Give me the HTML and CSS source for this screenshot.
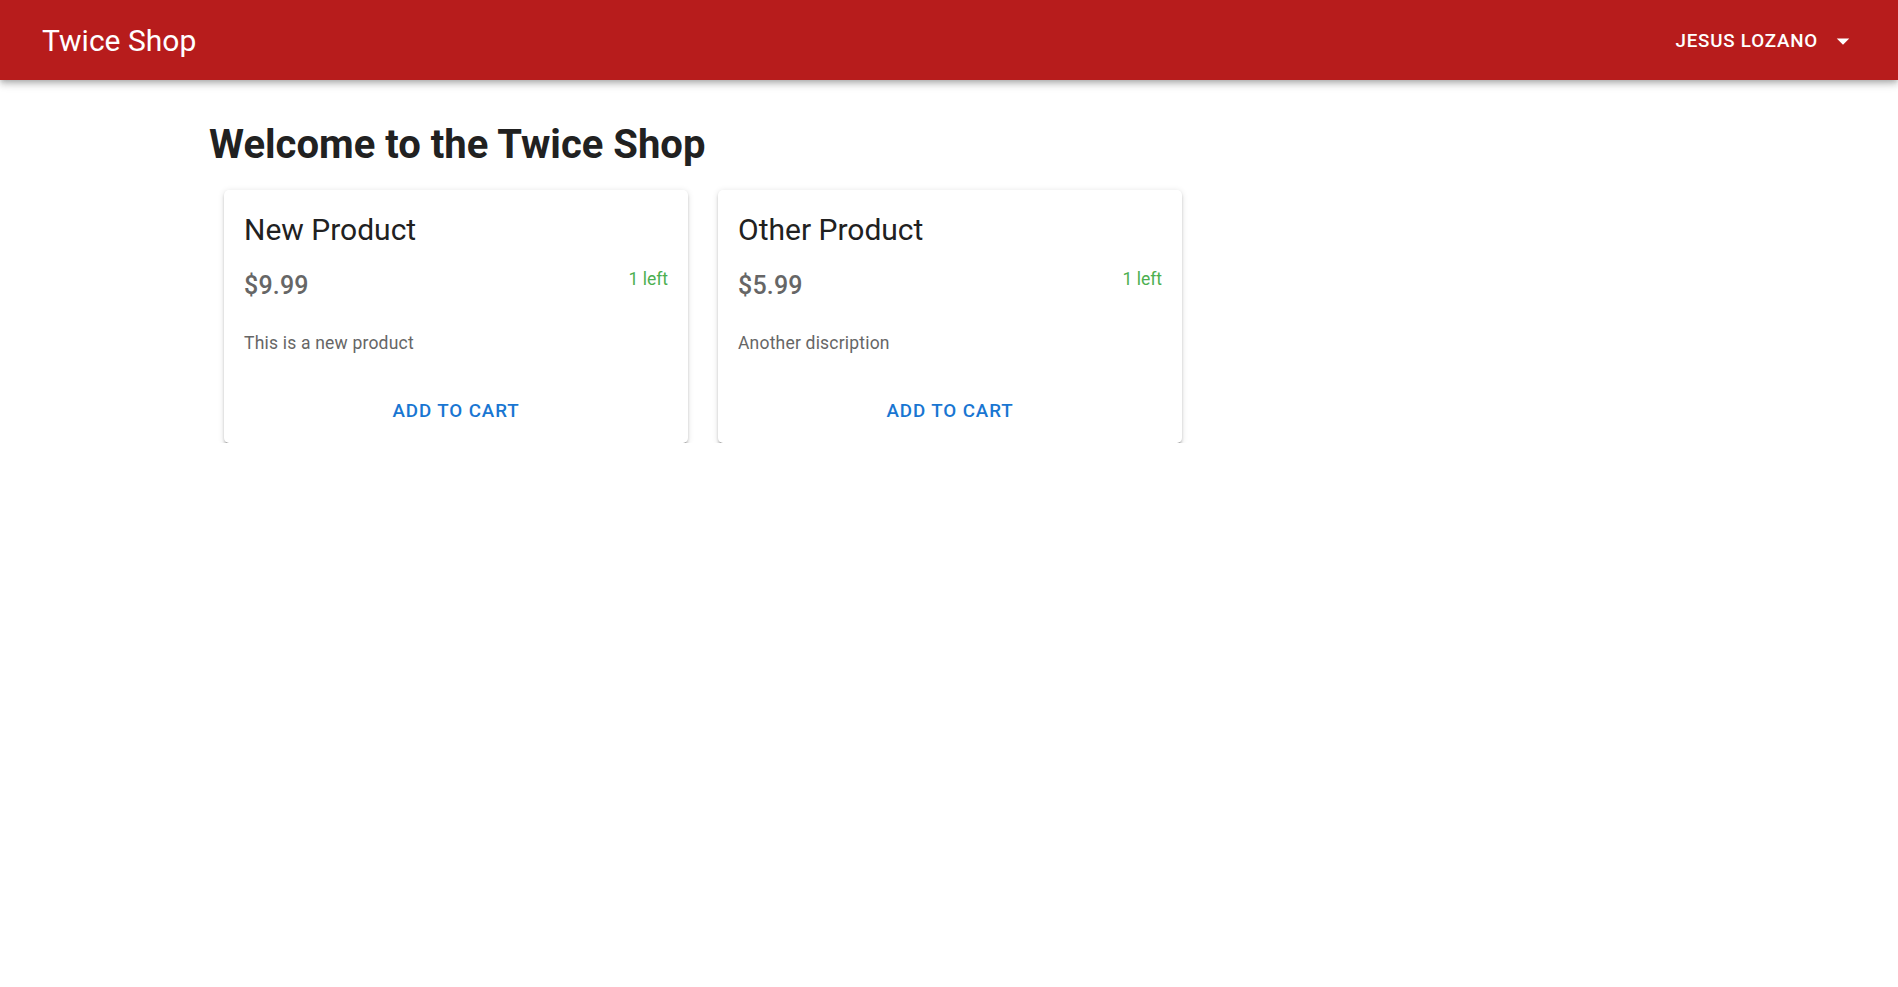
FILE: index.html
```html
<!DOCTYPE html>
<html lang="en">
<head>
<meta charset="utf-8">
<title>Twice Shop</title>
<link rel="stylesheet" href="styles.css">
</head>
<body>
<header class="appbar">
  <div class="brand">Twice Shop</div>
  <button class="user-btn">
    <span>Jesus Lozano</span>
    <svg class="drop" viewBox="0 0 24 24" width="30" height="30"><path d="M7 10l5 5 5-5z" fill="#fff"/></svg>
  </button>
</header>
<main class="page">
  <h1 class="welcome">Welcome to the Twice Shop</h1>
  <div class="cards">
    <div class="card">
      <div class="card-content">
        <h2 class="card-title">New Product</h2>
        <div class="price-row">
          <span class="price">$9.99</span>
          <span class="stock">1 left</span>
        </div>
        <p class="desc">This is a new product</p>
      </div>
      <div class="card-actions">
        <button class="cart-btn">Add to cart</button>
      </div>
    </div>
    <div class="card">
      <div class="card-content">
        <h2 class="card-title">Other Product</h2>
        <div class="price-row">
          <span class="price">$5.99</span>
          <span class="stock">1 left</span>
        </div>
        <p class="desc">Another discription</p>
      </div>
      <div class="card-actions">
        <button class="cart-btn">Add to cart</button>
      </div>
    </div>
  </div>
</main>
</body>
</html>
```

FILE: styles.css
```css
* { box-sizing: border-box; }
html, body {
  margin: 0;
  padding: 0;
  background: #fff;
  font-family: Roboto, "Liberation Sans", sans-serif;
}
.appbar {
  height: 80px;
  background: #b71c1c;
  color: #fff;
  display: flex;
  align-items: center;
  justify-content: space-between;
  padding: 0 30px 0 42px;
  box-shadow: 0px 2.5px 5px -1.25px rgba(0,0,0,0.2), 0px 5px 6px 0px rgba(0,0,0,0.14), 0px 1.25px 12.5px 0px rgba(0,0,0,0.12);
  position: relative;
  z-index: 1;
}
.brand {
  font-size: 30px;
  font-weight: 400;
  line-height: 40px;
  margin-top: 2px;
}
.user-btn {
  background: none;
  border: none;
  color: #fff;
  font-family: Roboto, "Liberation Sans", sans-serif;
  font-size: 18.75px;
  font-weight: 500;
  letter-spacing: 0.8px;
  text-transform: uppercase;
  display: flex;
  align-items: center;
  padding: 10px 10px;
  margin-top: 2px;
  line-height: 32px;
  cursor: pointer;
}
.drop {
  display: block;
  margin-left: 10px;
  margin-right: 0;
}
.page {
  padding: 39px 209px 0;
}
.welcome {
  margin: 0;
  font-size: 40px;
  font-weight: 700;
  line-height: 52.5px;
  color: #212121;
}
.cards {
  display: flex;
  gap: 30px;
  padding-left: 15px;
  margin-top: 18px;
}
.card {
  width: 464px;
  height: 253px;
  background: #fff;
  border-radius: 5px;
  box-shadow: 0px 3.75px 1.5px -2.5px rgba(0,0,0,0.25), 0px 2.5px 2.5px 0px rgba(0,0,0,0.16), 0px 1.25px 6.25px 0px rgba(0,0,0,0.13);
  display: flex;
  flex-direction: column;
}
.card-content {
  padding: 20px 20px 0;
}
.card-title {
  margin: 0;
  font-size: 30px;
  font-weight: 400;
  line-height: 40px;
  color: #212121;
}
.price-row {
  display: flex;
  justify-content: space-between;
  align-items: flex-start;
  margin-top: 16.5px;
}
.price {
  font-size: 25px;
  font-weight: 500;
  line-height: 40px;
  color: #666;
  letter-spacing: 0.2px;
}
.stock {
  font-size: 17.5px;
  line-height: 25px;
  color: #4caf50;
  margin-top: 1px;
}
.desc {
  margin: 25px 0 0;
  font-size: 17.5px;
  line-height: 25px;
  color: #666;
  letter-spacing: 0.2px;
}
.card-actions {
  margin-top: auto;
  display: flex;
  justify-content: center;
  padding: 11.5px 10px 8.5px;
}
.cart-btn {
  background: none;
  border: none;
  color: #1976d2;
  font-family: Roboto, "Liberation Sans", sans-serif;
  font-size: 18.75px;
  font-weight: 500;
  letter-spacing: 0.9px;
  text-transform: uppercase;
  padding: 7.5px 14px;
  line-height: 32px;
  cursor: pointer;
}
```
